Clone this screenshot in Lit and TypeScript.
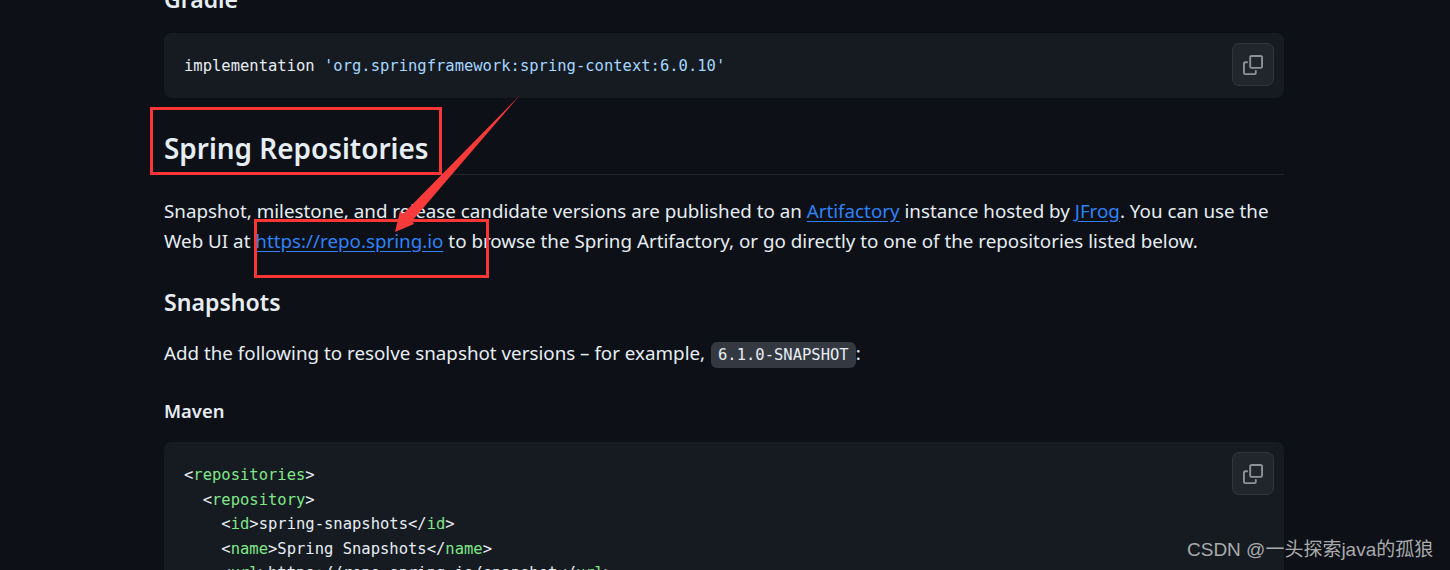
import { LitElement, html, css } from "lit";
import { customElement } from "lit/decorators.js";

const copyIcon = html`<svg viewBox="0 0 16 16" width="20" height="20" fill="#8b929b"><path d="M0 6.75C0 5.784.784 5 1.75 5h1.5a.75.75 0 0 1 0 1.5h-1.5a.25.25 0 0 0-.25.25v7.5c0 .138.112.25.25.25h7.5a.25.25 0 0 0 .25-.25v-1.5a.75.75 0 0 1 1.5 0v1.5A1.75 1.75 0 0 1 9.25 16h-7.5A1.75 1.75 0 0 1 0 14.25Z"/><path d="M5 1.75C5 .784 5.784 0 6.75 0h7.5C15.216 0 16 .784 16 1.75v7.5A1.75 1.75 0 0 1 14.25 11h-7.5A1.75 1.75 0 0 1 5 9.25Zm1.75-.25a.25.25 0 0 0-.25.25v7.5c0 .138.112.25.25.25h7.5a.25.25 0 0 0 .25-.25v-7.5a.25.25 0 0 0-.25-.25Z"/></svg>`;

@customElement("app-root")
export class AppRoot extends LitElement {
  static styles = css`
    :host { display: block; position: relative; height: 570px; overflow: hidden; background: #0d1117; color: #e6edf3; font-family: "Noto Sans", "Open Sans", sans-serif; font-size: 18.8px; }
    .doc { width: 1120px; margin: -16px 0 0 164px; }
    h4, h2, h3, h5, p { margin: 0; }
    .gradle { font-size: 23px; font-weight: 600; line-height: 31px; height: 30px; }
    pre { position: relative; margin: 0; background: #161b22; border-radius: 8px; font-family: "DejaVu Sans Mono", monospace; font-size: 15.5px; color: #e6edf3; box-sizing: border-box; padding: 20px; }
    .one { margin-top: 19px; height: 65px; line-height: 27px; }
    .maven { margin-top: 17px; height: 300px; line-height: 24.5px; padding-top: 21px; }
    .btn { position: absolute; top: 10px; right: 10px; width: 40px; height: 41px; box-sizing: content-box; border: 1px solid #30363d; border-radius: 7px; background: #21262d; display: flex; align-items: center; justify-content: center; }
    h2 { margin-top: 26px; height: 50px; line-height: 48px; font-size: 27.9px; font-weight: 600; border-bottom: 1px solid #21262d; }
    .intro { margin-top: 21px; line-height: 30px; }
    h3 { margin-top: 30px; font-size: 23.1px; font-weight: 600; line-height: 32px; }
    .add { margin-top: 20px; line-height: 30px; }
    h5 { margin-top: 27px; font-size: 18.4px; font-weight: 600; line-height: 28px; }
    a { color: #2f81f7; text-decoration: underline; text-underline-offset: 3px; }
    code { font-family: "DejaVu Sans Mono", monospace; font-size: 15.5px; background: #343941; border-radius: 6px; padding: 4px 7px; margin-left: 1px; }
    .str { color: #a5d6ff; }
    .tag { color: #7ee787; }
    .mark { position: absolute; box-sizing: border-box; border: 3px solid #fc3535; }
    .m1 { left: 150px; top: 107px; width: 292px; height: 68px; }
    .m2 { left: 254px; top: 219px; width: 235px; height: 59px; }
    .arrow { position: absolute; left: 0; top: 0; }
    .wm { position: absolute; left: 1187px; top: 537px; font-family: "Liberation Sans", "Noto Sans CJK SC", sans-serif; font-size: 19px; line-height: 26px; color: #a9aaab; white-space: nowrap; }
  `;

  render() {
    return html`
      <div class="doc">
        <h4 class="gradle">Gradle</h4>
        <pre class="one">implementation <span class="str">'org.springframework:spring-context:6.0.10'</span><div class="btn">${copyIcon}</div></pre>
        <h2>Spring Repositories</h2>
        <p class="intro">Snapshot, milestone, and release candidate versions are published to an <a>Artifactory</a> instance hosted by <a>JFrog</a>. You can use the Web UI at <a>https://repo.spring.io</a> to browse the Spring Artifactory, or go directly to one of the repositories listed below.</p>
        <h3>Snapshots</h3>
        <p class="add">Add the following to resolve snapshot versions – for example, <code>6.1.0-SNAPSHOT</code>:</p>
        <h5>Maven</h5>
        <pre class="maven">&lt;<span class="tag">repositories</span>&gt;
  &lt;<span class="tag">repository</span>&gt;
    &lt;<span class="tag">id</span>&gt;spring-snapshots&lt;/<span class="tag">id</span>&gt;
    &lt;<span class="tag">name</span>&gt;Spring Snapshots&lt;/<span class="tag">name</span>&gt;
    &lt;<span class="tag">url</span>&gt;https://repo.spring.io/snapshot&lt;/<span class="tag">url</span>&gt;<div class="btn">${copyIcon}</div></pre>
      </div>
      <div class="mark m1"></div>
      <div class="mark m2"></div>
      <svg class="arrow" width="1450" height="570"><polygon points="520,95 412,221 414,224 395,232 400,211 403,214" fill="#f83a3a"/></svg>
      <div class="wm">CSDN @一头探索java的孤狼</div>
    `;
  }
}
